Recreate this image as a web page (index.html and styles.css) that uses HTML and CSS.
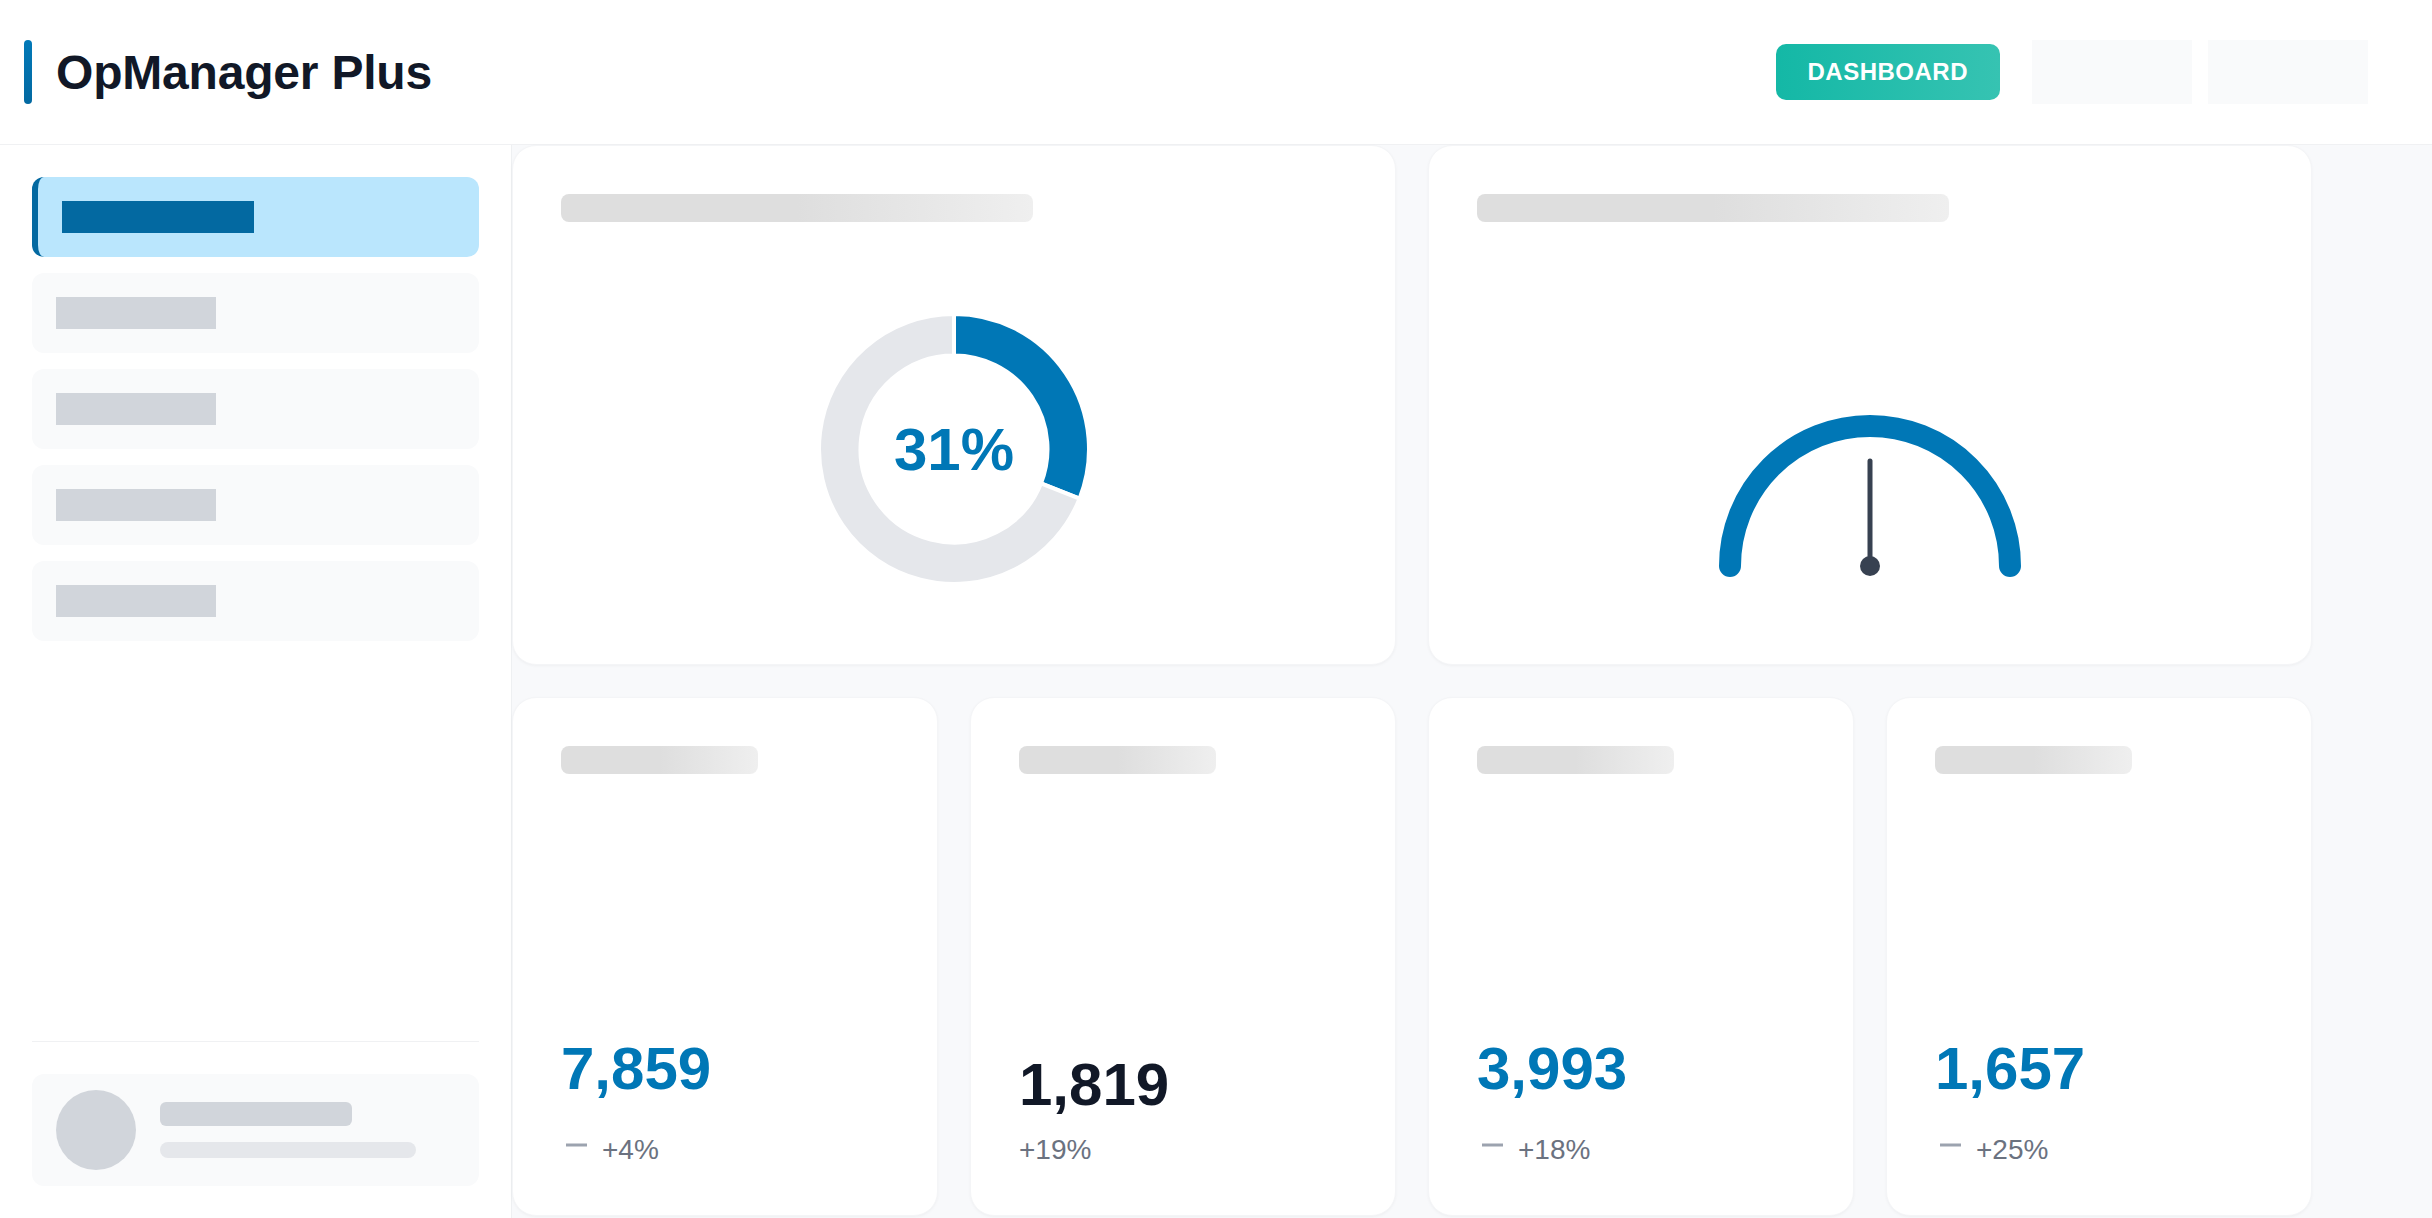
FILE: index.html
```html
<!DOCTYPE html>
<html lang="en">
<head>
    <meta charset="UTF-8">
    <meta name="viewport" content="width=device-width, initial-scale=1.0">
    <title>OpManager Plus</title>
    <link rel="stylesheet" href="styles.css">
</head>
<body>

<header class="topbar">
    <div class="brand">
        <span class="brand-mark"></span>
        <h1>OpManager Plus</h1>
    </div>
    <div class="topbar-actions">
        <button class="btn-primary">DASHBOARD</button>
        <div class="ph-box"></div>
        <div class="ph-box"></div>
    </div>
</header>

<div class="layout">
    <aside class="sidebar">
        <nav class="nav">
            <div class="nav-item active"><span class="nav-label"></span></div>
            <div class="nav-item"><span class="nav-label"></span></div>
            <div class="nav-item"><span class="nav-label"></span></div>
            <div class="nav-item"><span class="nav-label"></span></div>
            <div class="nav-item"><span class="nav-label"></span></div>
        </nav>
        <div class="sidebar-footer">
            <div class="profile">
                <div class="avatar"></div>
                <div class="profile-lines">
                    <span class="line-name"></span>
                    <span class="line-role"></span>
                </div>
            </div>
        </div>
    </aside>

    <main class="main">
        <div class="grid">
            <section class="card card-wide">
                <div class="skeleton"></div>
                <div class="chart">
                    <svg width="300" height="300" viewBox="0 0 300 300">
                        <path d="M150 15 A135 135 0 0 1 275.52 199.69 L236.94 184.42 A93.5 93.5 0 0 0 150 56.5 Z" fill="#0077b6" stroke="#fff" stroke-width="4"/>
                        <path d="M275.52 199.69 A135 135 0 1 1 150 15 L150 56.5 A93.5 93.5 0 1 0 236.94 184.42 Z" fill="#e5e7eb" stroke="#fff" stroke-width="4"/>
                        <text x="150" y="171" text-anchor="middle" class="donut-label">31%</text>
                    </svg>
                </div>
            </section>

            <section class="card card-wide">
                <div class="skeleton"></div>
                <div class="chart">
                    <svg width="400" height="300" viewBox="0 0 400 300">
                        <path d="M60 267 A140 140 0 0 1 340 267" fill="none" stroke="#0077b6" stroke-width="22" stroke-linecap="round"/>
                        <line x1="200" y1="267" x2="200" y2="162" stroke="#374151" stroke-width="5" stroke-linecap="round"/>
                        <circle cx="200" cy="267" r="10" fill="#374151"/>
                    </svg>
                </div>
            </section>

            <section class="card">
                <div class="skeleton"></div>
                <div class="value blue">7,859</div>
                <div class="change">
                    <svg class="trend" width="28" height="50" viewBox="0 0 28 50"><line x1="5" y1="28" x2="26" y2="28" stroke="#9ca3af" stroke-width="3"/></svg>
                    <span>+4%</span>
                </div>
            </section>

            <section class="card">
                <div class="skeleton"></div>
                <div class="value">1,819</div>
                <div class="change">
                    <span>+19%</span>
                </div>
            </section>

            <section class="card">
                <div class="skeleton"></div>
                <div class="value blue">3,993</div>
                <div class="change">
                    <svg class="trend" width="28" height="50" viewBox="0 0 28 50"><line x1="5" y1="28" x2="26" y2="28" stroke="#9ca3af" stroke-width="3"/></svg>
                    <span>+18%</span>
                </div>
            </section>

            <section class="card">
                <div class="skeleton"></div>
                <div class="value blue">1,657</div>
                <div class="change">
                    <svg class="trend" width="28" height="50" viewBox="0 0 28 50"><line x1="5" y1="28" x2="26" y2="28" stroke="#9ca3af" stroke-width="3"/></svg>
                    <span>+25%</span>
                </div>
            </section>
        </div>
    </main>
</div>

</body>
</html>
```

FILE: styles.css
```css
* { box-sizing: border-box; }
body { margin: 0; height: 100vh; display: flex; flex-direction: column; overflow: hidden; font-family: "Liberation Sans", Arial, sans-serif; background: #fff; color: #111827; }

/* header */
.topbar { height: 145px; flex-shrink: 0; display: flex; align-items: center; padding: 0 64px 0 24px; border-bottom: 1px solid #f0f1f3; background: #fff; }
.brand { display: flex; align-items: center; gap: 24px; }
.brand-mark { width: 8px; height: 64px; border-radius: 4px; background: linear-gradient(180deg, #0279b8, #0369a1); }
.brand h1 { margin: 0; font-size: 48px; font-weight: 700; color: #111827; letter-spacing: -0.2px; }
.topbar-actions { margin-left: auto; display: flex; align-items: center; gap: 16px; }
.btn-primary { margin-right: 16px; border: none; border-radius: 10px; padding: 16px 32px; font-family: inherit; font-size: 24px; line-height: 24px; font-weight: 700; letter-spacing: 0.5px; color: #fff; background: linear-gradient(90deg, #14b8a6, #36c3b2); cursor: pointer; }
.ph-box { width: 160px; height: 64px; background: #f9fafb; }

/* layout */
.layout { flex: 1; display: flex; min-height: 0; }
.sidebar { width: 512px; flex-shrink: 0; display: flex; flex-direction: column; padding: 32px; border-right: 1px solid #eef0f2; background: #fff; }
.nav { display: flex; flex-direction: column; gap: 16px; }
.nav-item { height: 80px; padding: 24px; border-radius: 12px; background: #f9fafb; }
.nav-label { display: block; width: 160px; height: 32px; background: #d1d5db; }
.nav-item.active { background: #bae6fd; border-left: 6px solid #0369a1; }
.nav-item.active .nav-label { width: 192px; background: #0369a1; }

.sidebar-footer { margin-top: auto; padding-top: 32px; border-top: 1px solid #f0f1f3; }
.profile { display: flex; align-items: center; gap: 24px; padding: 16px 24px; border-radius: 12px; background: #f9fafb; }
.avatar { width: 80px; height: 80px; border-radius: 50%; background: #d1d5db; flex-shrink: 0; }
.profile-lines { display: flex; flex-direction: column; gap: 16px; }
.line-name { display: block; width: 192px; height: 24px; border-radius: 6px; background: #d1d5db; }
.line-role { display: block; width: 256px; height: 16px; border-radius: 8px; background: #e5e7eb; }

/* main */
.main { flex: 1; background: #f8f9fb; min-width: 0; padding-bottom: 2px; }
.grid { max-width: 1800px; height: 100%; display: grid; grid-template-columns: repeat(4, 1fr); grid-template-rows: 1fr 1fr; gap: 32px; }
.card { display: flex; flex-direction: column; padding: 48px; background: #fff; border: 1px solid #f4f5f7; border-radius: 24px; box-shadow: 0 1px 3px rgba(0,0,0,0.04); min-height: 0; }
.card-wide { grid-column: span 2; }
.skeleton { width: 60%; height: 28px; border-radius: 8px; background: linear-gradient(90deg, #dedede 50%, #efefef 100%); flex-shrink: 0; }

.chart { flex: 1; margin-top: 61px; display: flex; align-items: center; justify-content: center; }
.donut-label { font-family: "Liberation Sans", Arial, sans-serif; font-size: 60px; font-weight: 700; fill: #0077b6; }

.value { margin-top: auto; margin-bottom: 12px; font-size: 60px; line-height: 72px; font-weight: 700; color: #111827; }
.value.blue { color: #0077b6; }
.change { display: flex; align-items: flex-end; gap: 13px; font-size: 28px; line-height: 34px; color: #6b7280; }
.trend { display: block; flex-shrink: 0; }
```
